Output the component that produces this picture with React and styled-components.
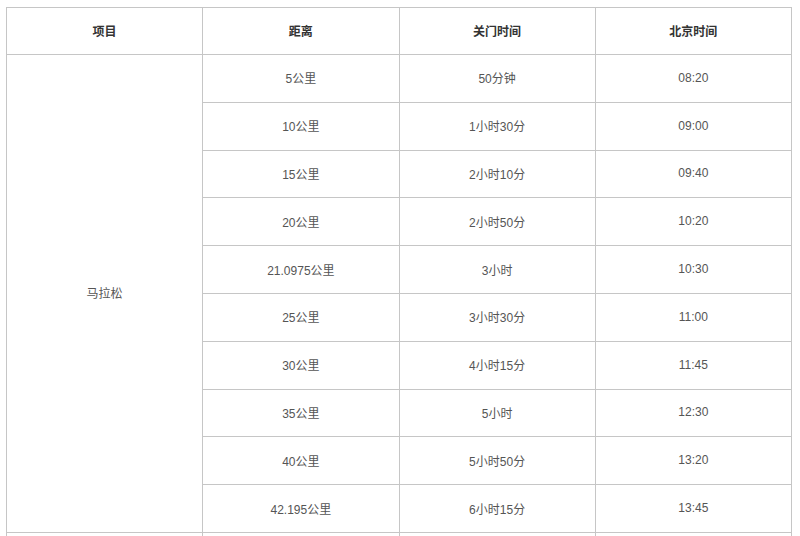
import React from "react";
import styled, { createGlobalStyle } from "styled-components";

const Global = createGlobalStyle`
  html, body { margin: 0; padding: 0; background: #fff; overflow: hidden; height: 536px; }
  body { padding: 7px 0 0 6px; box-sizing: border-box; font-family: "Liberation Sans", "Noto Sans CJK SC", sans-serif; }
`;

const Table = styled.table`
  border-collapse: collapse;
  width: 786px;
  table-layout: fixed;
  font-size: 12px;
  color: #555;
`;

const Th = styled.th`
  border: 1px solid #c6c6c6;
  height: 44px;
  padding: 0 0 2px;
  font-weight: bold;
  color: #333;
  text-align: center;
  vertical-align: middle;
`;

const Td = styled.td`
  border: 1px solid #c6c6c6;
  height: 45.8px;
  padding: 0 0 1px;
  text-align: center;
  vertical-align: middle;
`;

const Tail = styled.td`
  border: 1px solid #c6c6c6;
  border-bottom: none;
  height: 3px;
  padding: 0;
`;

const rows = [
  ["5公里", "50分钟", "08:20"],
  ["10公里", "1小时30分", "09:00"],
  ["15公里", "2小时10分", "09:40"],
  ["20公里", "2小时50分", "10:20"],
  ["21.0975公里", "3小时", "10:30"],
  ["25公里", "3小时30分", "11:00"],
  ["30公里", "4小时15分", "11:45"],
  ["35公里", "5小时", "12:30"],
  ["40公里", "5小时50分", "13:20"],
  ["42.195公里", "6小时15分", "13:45"],
];

export default function App() {
  return (
    <>
      <Global />
      <Table>
        <thead>
          <tr>
            <Th>项目</Th>
            <Th>距离</Th>
            <Th>关门时间</Th>
            <Th>北京时间</Th>
          </tr>
        </thead>
        <tbody>
          {rows.map((r, i) => (
            <tr key={i}>
              {i === 0 && <Td rowSpan={rows.length}>马拉松</Td>}
              <Td>{r[0]}</Td>
              <Td>{r[1]}</Td>
              <Td>{r[2]}</Td>
            </tr>
          ))}
          <tr>
            <Tail />
            <Tail />
            <Tail />
            <Tail />
          </tr>
        </tbody>
      </Table>
    </>
  );
}
